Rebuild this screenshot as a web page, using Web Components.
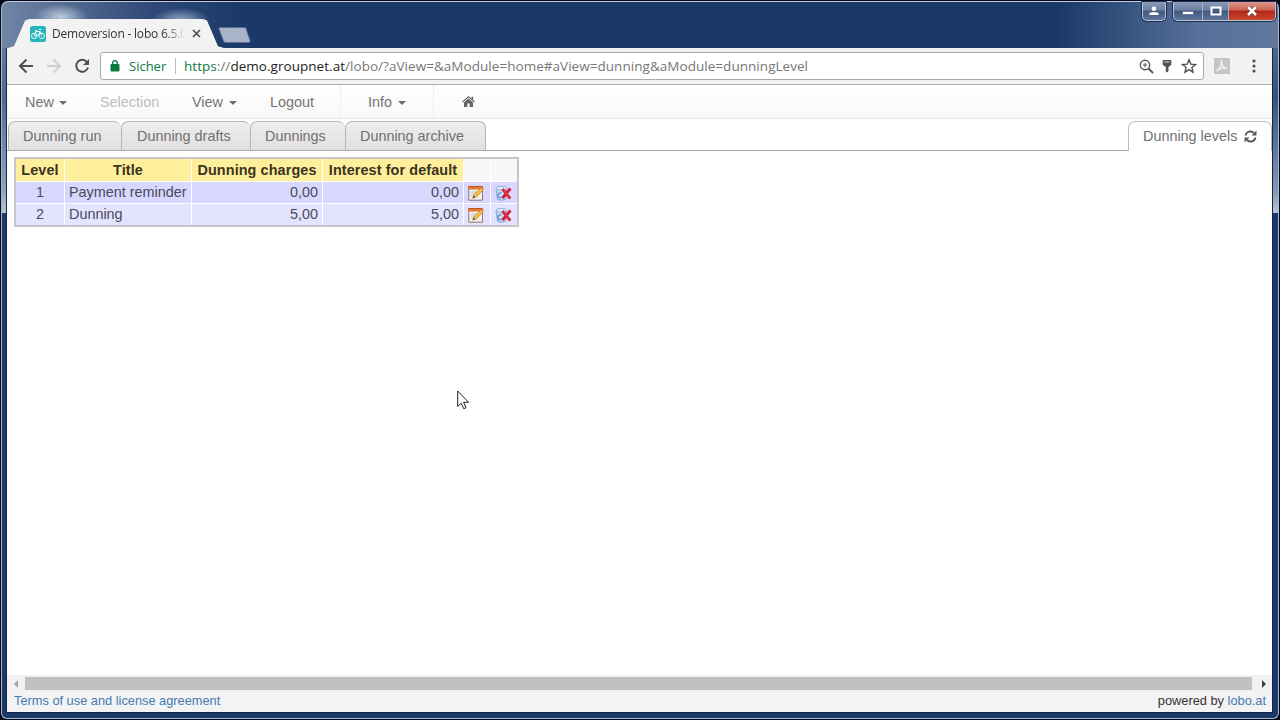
<!DOCTYPE html>
<html lang="en">
<head>
<meta charset="utf-8">
<title>Demoversion - lobo 6.5.0</title>
<style>
  html, body {
    margin: 0;
    height: 100%;
    overflow: hidden;
    background: #04081c;
    font-family: "Liberation Sans", Arial, sans-serif;
  }
</style>
</head>
<body>
<browser-window>
  <browser-titlebar slot="title"></browser-titlebar>
  <browser-toolbar></browser-toolbar>
  <lobo-nav></lobo-nav>
  <lobo-tabs>
    <lobo-tab style="width: 113px">Dunning run</lobo-tab>
    <lobo-tab style="width: 129px; padding-left: 15px">Dunning drafts</lobo-tab>
    <lobo-tab style="width: 95px">Dunnings</lobo-tab>
    <lobo-tab style="width: 141px">Dunning archive</lobo-tab>
    <lobo-tab active style="width: 144px">Dunning levels</lobo-tab>
  </lobo-tabs>
  <dunning-table></dunning-table>
  <page-scrollbar></page-scrollbar>
  <page-footer></page-footer>
</browser-window>
<mouse-pointer></mouse-pointer>

<script>
function define(name, html) {
  customElements.define(name, class extends HTMLElement {
    constructor() {
      super();
      this.attachShadow({ mode: 'open' }).innerHTML = html;
    }
  });
}

define('browser-window', `
  <style>
    :host {
      display: flex;
      flex-direction: column;
      box-sizing: border-box;
      width: 1278px;
      height: 718px;
      margin: 1px 0 0 1px;
      padding: 0 5px 5px 4px;
      border: 1px solid #a9b9d0;
      border-top-color: #c3cbdc;
      border-radius: 7px 7px 6px 6px;
      background:
        radial-gradient(closest-side, rgba(205,218,235,.85), rgba(160,180,210,0)) 32px 2px / 54px 26px no-repeat,
        radial-gradient(closest-side, rgba(190,206,228,.7), rgba(150,170,200,0)) 150px 6px / 58px 24px no-repeat,
        linear-gradient(90deg, #7186a6, #51698f 70px, #2f4a78 150px, rgba(27,57,104,0) 240px) 0 0 / 100% 46px no-repeat,
        linear-gradient(270deg, #60799c, #55709a 80px, rgba(27,57,104,0) 220px) 0 0 / 100% 46px no-repeat,
        linear-gradient(#7186a6, #506a94 45%, #8fa3bf 90%, #b9c6d6) 0 0 / 5px 211px no-repeat,
        linear-gradient(#60799c, #34537f 45%, #8398b3 90%, #b9c6d6) 100% 0 / 6px 211px no-repeat,
        #1b3968;
    }
    .page {
      display: flex;
      flex-direction: column;
      flex: 1;
      min-height: 0;
      background: #fff;
      border: 1px solid #10264b;
      border-width: 0 1px 1px;
    }
  </style>
  <slot name="title"></slot>
  <div class="page"><slot></slot></div>
`);

define('browser-titlebar', `
  <style>
    :host {
      display: flex;
      justify-content: space-between;
      height: 46px;
      font: 12px "Open Sans", "Noto Sans", sans-serif;
    }
    .left { display: flex; align-items: flex-end; }
    .tab {
      display: flex;
      align-items: center;
      box-sizing: border-box;
      width: 216px;
      height: 29px;
      margin-left: 2px;
      padding-left: 22px;
      background: #f2f2f2;
      clip-path: polygon(0 100%, 6px 94%, 17px 5%, 21px 0, 195px 0, 199px 5%, 210px 94%, 216px 100%);
      color: #333;
    }
    .label {
      width: 138px;
      margin: 0 2px 0 6px;
      white-space: nowrap;
      letter-spacing: -.2px;
      -webkit-mask-image: linear-gradient(90deg, #000 112px, transparent 134px);
    }
    .new { margin: 0 0 5px -7px; align-self: flex-end; }
    .right { display: flex; align-items: flex-start; margin-right: -3px; }
    .group {
      display: flex;
      height: 18px;
      border: 1px solid #b9c4d6;
      border-top: 0;
      border-radius: 0 0 5px 5px;
      box-shadow: 0 0 0 1px #1b2f52;
      background: linear-gradient(#8a9bb8, #6c80a1 45%, #425a82 50%, #5d7398);
      overflow: hidden;
    }
    .group span { display: flex; justify-content: center; align-items: center; }
    .group span + span { border-left: 1px solid #a5b2c8; }
    .close { background: linear-gradient(#dd9a8d, #cd6251 45%, #b52517 50%, #c8482f); }
  </style>
  <div class="left">
    <div class="tab">
      <svg width="16" height="16" viewBox="0 0 16 16" fill="none" stroke="#fff" stroke-width=".9">
        <rect width="16" height="16" rx="2.5" fill="#27b5bb" stroke="none"/>
        <circle cx="4.2" cy="9.8" r="2.7"/><circle cx="11.8" cy="9.8" r="2.7"/>
        <path d="M4.2 9.800 6 5.500h4L7.800 9.800zM10 5.500l1.800 4.300M5 4.500h2M9 3.500h2.300"/>
      </svg>
      <span class="label">Demoversion - lobo 6.5.0</span>
      <svg width="9" height="9" viewBox="0 0 9 9" stroke="#4c4c4c" stroke-width="1.600"><path d="M1 1l7 7M8 1l-7 7"/></svg>
    </div>
    <svg class="new" width="34" height="16" viewBox="0 0 34 16"><path d="M3 .5h24q1.500 0 2 1l4 12q.5 2-1 2H9q-2 0-2.500-1.500L2 2Q1.500.5 3 .5z" fill="#a9b4c8" stroke="#5a6d90" stroke-width=".8"/></svg>
  </div>
  <div class="right">
    <div class="group" style="width: 22px; margin-right: 7px">
      <span style="width: 22px"><svg width="10" height="10" viewBox="0 0 10 10" fill="#fff"><circle cx="5" cy="2.800" r="2.300"/><path d="M.5 9V7.500Q1 6 5 6t4.500 1.500V9z"/></svg></span>
    </div>
    <div class="group" style="width: 101px">
      <span style="width: 28px"><svg width="12" height="10" viewBox="0 0 12 10"><path d="M.5 5.500h11v3H.5z" fill="#fff" stroke="#46536b" stroke-width=".6"/></svg></span>
      <span style="width: 26px"><svg width="12" height="10" viewBox="0 0 12 10"><path d="M1.500 1.500h9v7h-9z" fill="none" stroke="#fff" stroke-width="2"/><path d="M3.500 3.500h5v3h-5z" fill="#4a6087" stroke="#33435f" stroke-width=".6"/></svg></span>
      <span class="close" style="width: 46px"><svg width="12" height="10" viewBox="0 0 12 10"><path d="M2 1l8 8M10 1L2 9" stroke="#5c3333" stroke-width="3.800"/><path d="M2 1l8 8M10 1L2 9" stroke="#fff" stroke-width="2.600"/></svg></span>
    </div>
  </div>
`);

define('browser-toolbar', `
  <style>
    :host {
      display: flex;
      align-items: center;
      box-sizing: border-box;
      height: 37px;
      padding: 0 10px 0 11px;
      background: #f2f2f2;
      border-bottom: 1px solid #b0b0b0;
      font: 13.5px "Open Sans", "Noto Sans", sans-serif;
    }
    svg { flex: none; }
    .url {
      display: flex;
      align-items: center;
      box-sizing: border-box;
      width: 1104px;
      height: 28px;
      margin-left: 10px;
      padding: 0 6px 0 9px;
      border: 1px solid #aaa;
      border-radius: 3px;
      background: #fff;
      color: #777;
      white-space: nowrap;
    }
    .secure {
      width: 38px;
      margin-left: 9px;
      padding-right: 8px;
      border-right: 1px solid #bbb;
      font-size: 13px;
      line-height: 16px;
    }
    .secure, .https { color: #0b7a3e; }
    .address { flex: 1; margin-left: 8px; letter-spacing: .04px; }
    b { font-weight: 400; color: #222; }
  </style>
  <svg width="16" height="16" viewBox="0 0 16 16" fill="none" stroke="#505050" stroke-width="2"><path d="M15 8H2M8.500 1.500L2 8l6.500 6.500"/></svg>
  <svg style="margin-left: 12px" width="16" height="16" viewBox="0 0 16 16" fill="none" stroke="#d0d0d0" stroke-width="2"><path d="M1 8h13M7.500 1.500L14 8l-6.500 6.500"/></svg>
  <svg style="margin-left: 12px" width="16" height="16" viewBox="0 0 16 16"><path d="M13.300 4.500A6 6 0 1 0 14 9.500" fill="none" stroke="#505050" stroke-width="2"/><path d="M15 1v6H9z" fill="#505050"/></svg>
  <div class="url">
    <svg width="10" height="12" viewBox="0 0 10 12"><path d="M1 4.500h8v6.500H1z" fill="#0b7a3e" stroke="#0b7a3e"/><path d="M2.700 5V3a2.300 2.300 0 0 1 4.600 0v2" fill="none" stroke="#0b7a3e" stroke-width="1.300"/></svg>
    <span class="secure">Sicher</span>
    <span class="address"><span class="https">https</span>://<b>demo.groupnet.at</b>/lobo/?aView=&amp;aModule=home#aView=dunning&amp;aModule=dunningLevel</span>
    <svg width="15" height="15" viewBox="0 0 15 15" fill="none" stroke="#555"><circle cx="6" cy="6" r="4.700" stroke-width="1.400"/><path d="M9.500 9.500L14 14" stroke-width="1.900"/><path d="M3.800 6h4.400M6 3.800v4.400"/></svg>
    <svg style="margin-left: 8px" width="10" height="14" viewBox="0 0 10 14" fill="#505050"><path d="M1.500 1h7q.8 0 .8 1v3.500L7.500 7.500H6.500V12L5 13.500 3.800 12.500V7.500H2.500L.7 5.500V2q0-1 .8-1z"/><path d="M2.500 3h5" stroke="#ddd"/></svg>
    <svg style="margin-left: 9px" width="16" height="16" viewBox="0 0 16 16" fill="none" stroke="#505050" stroke-width="1.400"><path d="M8 1.800l1.800 4.300 4.700.4-3.600 3 1.100 4.700L8 11.700l-4 2.500 1.100-4.700-3.600-3 4.700-.4z"/></svg>
  </div>
  <svg style="margin-left: 10px" width="16" height="16" viewBox="0 0 16 16"><path d="M0 0h16v16H0z" fill="#c6c6c6"/><path d="M2.500 13C6 11 8.500 6 7.500 2.500 6.500 2 6.800 9.500 13.500 10.500 10 9 5 10 2.500 13z" fill="none" stroke="#f6f6f6" stroke-width="1.200"/></svg>
  <svg style="margin-left: 22px" width="4" height="14" viewBox="0 0 4 14" fill="#505050"><circle cx="2" cy="2" r="1.600"/><circle cx="2" cy="7" r="1.600"/><circle cx="2" cy="12" r="1.600"/></svg>
`);

define('lobo-nav', `
  <style>
    :host {
      display: flex;
      box-sizing: border-box;
      height: 34px;
      padding-left: 3px;
      border-bottom: 1px solid #e4e4e4;
      background: linear-gradient(#fff, #f8f8f8);
      color: #747474;
      font-size: 14.4px;
      line-height: 34px;
    }
    span { display: flex; align-items: center; box-sizing: border-box; padding-left: 15px; }
    .caret::after {
      content: "";
      margin: 2px 0 0 6px;
      border: 4px solid transparent;
      border-top-color: #6e6e6e;
      border-bottom: 0;
    }
    .caret:first-of-type::after { margin-left: 5px; }
    .line { border-right: 1px solid #efefef; }
  </style>
  <span class="caret" style="width: 75px">New</span>
  <span style="width: 92px; color: #bdbdbd">Selection</span>
  <span class="caret" style="width: 78px">View</span>
  <span class="line" style="width: 86px">Logout</span>
  <span class="caret line" style="width: 93px; padding-left: 27px">Info</span>
  <span style="padding-left: 28px"><svg width="13" height="11" viewBox="0 0 13 11" fill="#636363"><path d="M6.500 0L13 5.800l-.8.800-5.700-5-5.700 5L0 5.800z"/><path d="M9.500.7h1.700v3.500L9.500 2.700z"/><path d="M6.500 2.600L11 6.500V11H7.700V7.500H5.300V11H2V6.500z"/></svg></span>
`);

define('lobo-tabs', `
  <style>
    :host {
      display: flex;
      height: 30px;
      padding: 2px 0 0 1px;
      background: linear-gradient(#a9a9a9, #a9a9a9) 0 100% / 100% 1px no-repeat;
    }
  </style>
  <slot></slot>
`);

define('lobo-tab', `
  <style>
    :host {
      display: flex;
      align-items: center;
      box-sizing: border-box;
      height: 30px;
      padding-left: 14px;
      border: 1px solid #b5b5b5;
      border-bottom-color: #a9a9a9;
      border-right-width: 0;
      border-radius: 7px 7px 0 0;
      background: linear-gradient(#eee, #e0e0e0);
      color: #707070;
      font-size: 14.4px;
      white-space: nowrap;
    }
    :host(:nth-child(4)) { border-right-width: 1px; }
    :host([active]) {
      margin-left: auto;
      padding-bottom: 1px;
      border-color: #bbb;
      border-right-width: 1px;
      border-bottom: 0;
      background: #fff;
    }
    svg { display: none; margin-left: 7px; }
    :host([active]) svg { display: block; }
  </style>
  <slot></slot>
  <svg width="13" height="13" viewBox="0 0 13 13"><path d="M1.500 5.500A5 5 0 0 1 10 3M11.500 7.500A5 5 0 0 1 3 10" fill="none" stroke="#585858" stroke-width="1.900"/><path d="M12.500.5v5h-5zM.5 12.500v-5h5z" fill="#585858"/></svg>
`);

define('edit-icon', `
  <style>:host { display: block; width: 16px; height: 16px; }</style>
  <svg width="16" height="16" viewBox="0 0 16 16">
    <path d="M.8 1.500h13.700v13.700H.8z" fill="#f2f0ec" stroke="#8f7a68"/>
    <path d="M.3 1h14.700v3.500H.3z" fill="#e2782c"/>
    <path d="M.5 1.500h14" stroke="#bd5523"/>
    <path d="M3 7h6M3 9h4M3 11h3" stroke="#c4c4d0"/>
    <path d="M14 4L6.500 11.500" stroke="#c08a1c" stroke-width="3.400"/>
    <path d="M14 4L6.500 11.500" stroke="#ffc93c" stroke-width="2"/>
    <path d="M5.500 10.200L4.300 13.500l3.300-1z" fill="#665040"/>
    <path d="M13 3l1.300-1.200L16 3.500 15 5z" fill="#d8885c"/>
  </svg>
`);

define('delete-icon', `
  <style>:host { display: block; width: 17px; height: 16px; }</style>
  <svg width="17" height="16" viewBox="0 0 17 16">
    <path d="M1 3.500l1.500 11q4 1.500 8 0l1.500-11z" fill="#c5dcf6" stroke="#7fa3d6"/>
    <ellipse cx="6.500" cy="3.300" rx="5.500" ry="1.800" fill="#e5eefb" stroke="#8cadda"/>
    <path d="M6.500 8a2.500 2.500 0 1 0 .2 4.500" fill="none" stroke="#4c80cc" stroke-width="1.200"/>
    <path d="M7.500 4l7.800 9.500M15.500 3.500L7.500 13" stroke="#d51f36" stroke-width="2.800"/>
    <path d="M8.500 4.700l6.200 7.500" stroke="#ef5364" stroke-width=".8"/>
  </svg>
`);

define('dunning-table', `
  <style>
    :host { display: block; flex: 1; padding: 6px 0 0 7px; color: #4a4a58; font-size: 14.4px; }
    table {
      table-layout: fixed;
      width: 505px;
      border: 2px solid #c6c6ca;
      border-collapse: separate;
      border-spacing: 0;
    }
    th, td {
      box-sizing: border-box;
      height: 22px;
      padding: 0 4px 1px;
      border: 0 solid #fff;
      border-width: 0 1px 1px 0;
      line-height: 19px;
      white-space: nowrap;
    }
    tr > :last-child { border-right-width: 0; }
    tr:last-child > td { height: 21px; border-bottom-width: 0; }
    tr > :first-child { text-align: center; }
    th {
      height: 23px;
      padding: 0;
      background: #ffef9c;
      color: #3a3420;
      letter-spacing: .1px;
    }
    th:empty { background: #f7f7f7; }
    td { background: #e3e3ff; }
    tr.odd td { background: #d8d7ff; }
    .num { text-align: right; }
    td.icon { padding: 0 0 0 4px; }
  </style>
  <table>
    <colgroup><col style="width: 49px"><col style="width: 127px"><col style="width: 131px"><col style="width: 141px"><col style="width: 27px"><col style="width: 26px"></colgroup>
    <tr><th>Level</th><th>Title</th><th>Dunning charges</th><th>Interest for default</th><th></th><th></th></tr>
    <tr class="odd"><td>1</td><td>Payment reminder</td><td class="num">0,00</td><td class="num">0,00</td><td class="icon"><edit-icon></edit-icon></td><td class="icon"><delete-icon></delete-icon></td></tr>
    <tr><td>2</td><td>Dunning</td><td class="num">5,00</td><td class="num">5,00</td><td class="icon"><edit-icon></edit-icon></td><td class="icon"><delete-icon></delete-icon></td></tr>
  </table>
`);

define('page-scrollbar', `
  <style>
    :host { display: flex; align-items: center; height: 17px; padding: 0 5px 0 6px; background: #f1f1f1; }
    .thumb { flex: 1; height: 13px; margin: 0 9px 0 6px; background: #c1c1c1; }
  </style>
  <svg width="6" height="8" viewBox="0 0 6 8"><path d="M5 0v8L1 4z" fill="#a3a3a3"/></svg>
  <div class="thumb"></div>
  <svg width="6" height="8" viewBox="0 0 6 8"><path d="M1 0v8l4-4z" fill="#404040"/></svg>
`);

define('page-footer', `
  <style>
    :host {
      display: flex;
      justify-content: space-between;
      height: 20px;
      padding: 0 6px 0 7px;
      background: #f3f3f3;
      color: #333;
      font-size: 12.8px;
      line-height: 17px;
    }
    a { color: #457ab5; }
  </style>
  <a>Terms of use and license agreement</a>
  <span>powered by <a>lobo.at</a></span>
`);

define('mouse-pointer', `
  <style>:host { position: absolute; left: 457px; top: 390px; }</style>
  <svg width="13" height="20" viewBox="0 0 13 20"><path d="M.7 1v15.500l3.500-3.300 2.500 5.500 2.300-1-2.400-5.400h5z" fill="#fff" stroke="#222"/></svg>
`);
</script>
</body>
</html>
